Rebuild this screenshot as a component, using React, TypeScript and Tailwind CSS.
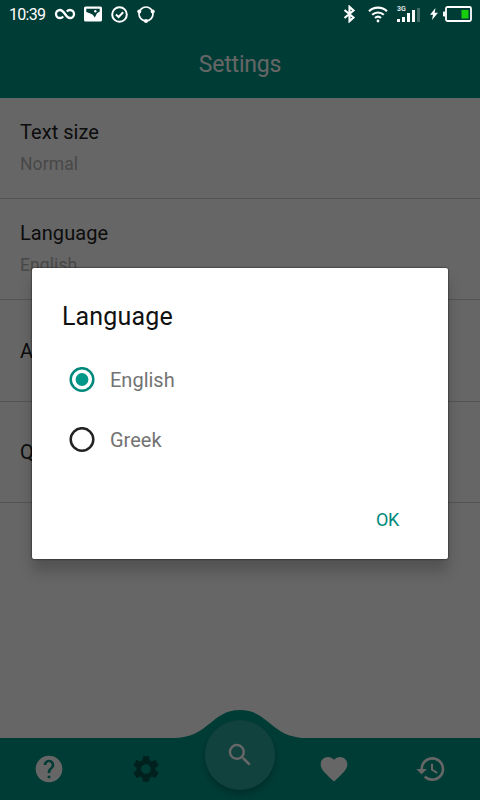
import React from 'react';
import { MdFavorite, MdHelp, MdHistory, MdSearch, MdSettings } from 'react-icons/md';

interface SettingItem {
  title: string;
  value?: string;
  className: string;
}

const settings: SettingItem[] = [
  { title: 'Text size', value: 'Normal', className: 'h-[101px]' },
  { title: 'Language', value: 'English', className: 'h-[101px]' },
  { title: 'About', className: 'h-[102px]' },
  { title: 'Quit', className: 'h-[101px]' },
];

const StatusBar: React.FC = () => (
  <div className="absolute inset-x-0 top-0 z-20 flex h-7 items-center text-white">
    <span className="ml-[9px] w-[37px] pt-px text-[16px] leading-7 tracking-[-0.7px]">10:39</span>
    <svg className="ml-2" width="22" height="14" viewBox="0 0 22 14" fill="none" stroke="currentColor" strokeWidth="2.3">
      <path d="M12.800 4.600C13.700 3.600 14.600 3 16 3a4 4 0 1 1 0 8C11.500 11 10.500 3 6 3a4 4 0 1 0 0 8c1.400 0 2.300-.600 3.200-1.600" />
    </svg>
    <svg className="ml-2" width="18" height="16" viewBox="0 0 18 16">
      <rect x="0" y="0.500" width="18" height="15" rx="1.500" fill="currentColor" />
      <path d="M2.300 2.700h13.400v2.800l-2.700 1.800-2.200 4.200-2-2.700-3-1.600-3.500-1.200z" fill="#003c36" />
      <circle cx="11.300" cy="5.300" r="1.200" fill="currentColor" />
    </svg>
    <svg className="ml-[9px]" width="17" height="17" viewBox="0 0 17 17" fill="none" stroke="currentColor" strokeWidth="2">
      <circle cx="8.500" cy="8.500" r="7.300" />
      <path d="M5 8.500l2.600 2.500 4.600-4.800" />
    </svg>
    <svg className="ml-[9px]" width="18" height="18" viewBox="0 0 18 18">
      <circle cx="9" cy="9" r="7" fill="none" stroke="currentColor" strokeWidth="1.700" />
      <circle cx="2.300" cy="6.500" r="2" fill="currentColor" />
      <circle cx="15.700" cy="6.500" r="2" fill="currentColor" />
      <circle cx="9" cy="16" r="2" fill="currentColor" />
    </svg>

    <svg className="ml-auto" width="14" height="18" viewBox="0 0 14 18" fill="none" stroke="currentColor" strokeWidth="2.100">
      <path d="M2.500 5l9 7.500-4 3.700V1.800l4 3.700-9 7.500" />
    </svg>
    <svg className="ml-3" width="20" height="18" viewBox="0 0 20 18" fill="none" stroke="currentColor" strokeWidth="2.200">
      <path d="M1 6.200a13 13 0 0 1 18 0M4.200 9.800a8.500 8.500 0 0 1 11.600 0M7 13a4.600 4.600 0 0 1 6 0" />
      <circle cx="10" cy="16" r="1.400" fill="currentColor" stroke="none" />
    </svg>
    <div className="relative ml-[9px] flex h-[15px] w-[23px] items-end gap-[2px]">
      <span className="absolute -top-[1px] left-0 text-[7px] leading-[7px] font-medium">3G</span>
      <span className="h-[3px] w-[3px] bg-white" />
      <span className="h-[5px] w-[3px] bg-white" />
      <span className="h-[9px] w-[3px] bg-white" />
      <span className="h-[12px] w-[3px] bg-white" />
      <span className="h-[14px] w-[3px] bg-white/25" />
    </div>
    <svg className="ml-[10px]" width="8" height="12" viewBox="0 0 8 12" fill="currentColor">
      <path d="M5.500 0L0 6.800h3L2 12l6-7.200H4.700z" />
    </svg>
    <svg className="mr-[8px] ml-[5px]" width="29" height="16" viewBox="0 0 29 16">
      <rect x="3" y="1" width="25" height="14" rx="1.500" fill="none" stroke="currentColor" strokeWidth="1.800" />
      <rect x="0" y="5.500" width="2.500" height="5" rx="0.800" fill="currentColor" />
      <rect x="18.500" y="4" width="7" height="8.500" fill="#17cf0c" />
    </svg>
  </div>
);

const SettingRow: React.FC<{ item: SettingItem }> = ({ item }) => (
  <div className={`flex flex-col justify-center border-b border-[#cfcfcf] px-5 ${item.className}`}>
    <div className={`text-[20px] leading-[26px] tracking-[0.05px] text-[#222] ${item.value ? '-mt-[2px]' : ''}`}>{item.title}</div>
    {item.value && (
      <div className="mt-[7px] text-[17.500px] leading-6 tracking-[0.1px] text-[#b4b4b4]">{item.value}</div>
    )}
  </div>
);

const BottomNav: React.FC = () => (
  <nav className="relative h-[90px] shrink-0 text-white">
    <svg className="absolute inset-0" width="480" height="90" viewBox="0 0 480 90">
      <path d="M0 28H173C209 28 211 0 240 0S271 28 307 28H480V90H0z" fill="#009688" />
    </svg>
    <div className="relative flex h-full items-end">
      <button className="flex h-[63px] flex-1 items-center justify-center" aria-label="Help">
        <MdHelp size={32} />
      </button>
      <button className="flex h-[63px] flex-1 items-center justify-center text-[#00534a]" aria-label="Settings">
        <MdSettings size={32} />
      </button>
      <div className="flex w-[90px] shrink-0 justify-center pb-[10px]">
        <button className="flex size-[70px] items-center justify-center rounded-full bg-[#2ca599] shadow-[0_4px_7px_rgba(0,0,0,0.250)]" aria-label="Search">
          <MdSearch size={30} />
        </button>
      </div>
      <button className="flex h-[63px] flex-1 items-center justify-center" aria-label="Favorites">
        <MdFavorite size={32} />
      </button>
      <button className="flex h-[63px] flex-1 items-center justify-center" aria-label="History">
        <MdHistory size={32} />
      </button>
    </div>
  </nav>
);

const RadioOption: React.FC<{ label: string; checked?: boolean }> = ({ label, checked = false }) => (
  <label className="flex h-[60px] items-center">
    <svg width="26" height="26" viewBox="0 0 26 26" fill="none">
      <circle cx="13" cy="12.500" r="11.300" stroke={checked ? '#00897b' : '#222'} strokeWidth="2.500" />
      {checked && <circle cx="13" cy="12.500" r="6.400" fill="#009688" />}
    </svg>
    <span className="ml-[15px] text-[20px] leading-6 text-[#737373]">{label}</span>
  </label>
);

const LanguageDialog: React.FC = () => (
  <div className="absolute inset-0 z-10 bg-black/60 px-8 pt-[268px]">
    <div className="flex h-[291px] flex-col rounded-[2px] bg-white shadow-[0_0_2px_rgba(0,0,0,0.900),0_12px_14px_rgba(0,0,0,0.200)]">
      <h2 className="mt-[33px] ml-[30px] text-[25px] leading-8 tracking-[0.150px] text-[#111]">Language</h2>
      <div className="mt-[17px] ml-[37px]">
        <RadioOption label="English" checked />
        <RadioOption label="Greek" />
      </div>
      <button className="mt-[38px] mr-[49px] self-end text-[18px] leading-6 tracking-[-0.3px] text-[#00897b]">OK</button>
    </div>
  </div>
);

export default function App() {
  return (
    <div className="relative flex h-[800px] w-[480px] flex-col overflow-hidden bg-white font-['Roboto',sans-serif]">
      <StatusBar />
      <header className="flex h-[98px] shrink-0 items-center justify-center bg-[#009688] pt-[32px]">
        <h1 className="text-[23px] leading-8 tracking-[-0.2px] text-white">Settings</h1>
      </header>
      <main className="flex-1">
        {settings.map((item) => (
          <SettingRow key={item.title} item={item} />
        ))}
      </main>
      <BottomNav />
      <LanguageDialog />
    </div>
  );
}
